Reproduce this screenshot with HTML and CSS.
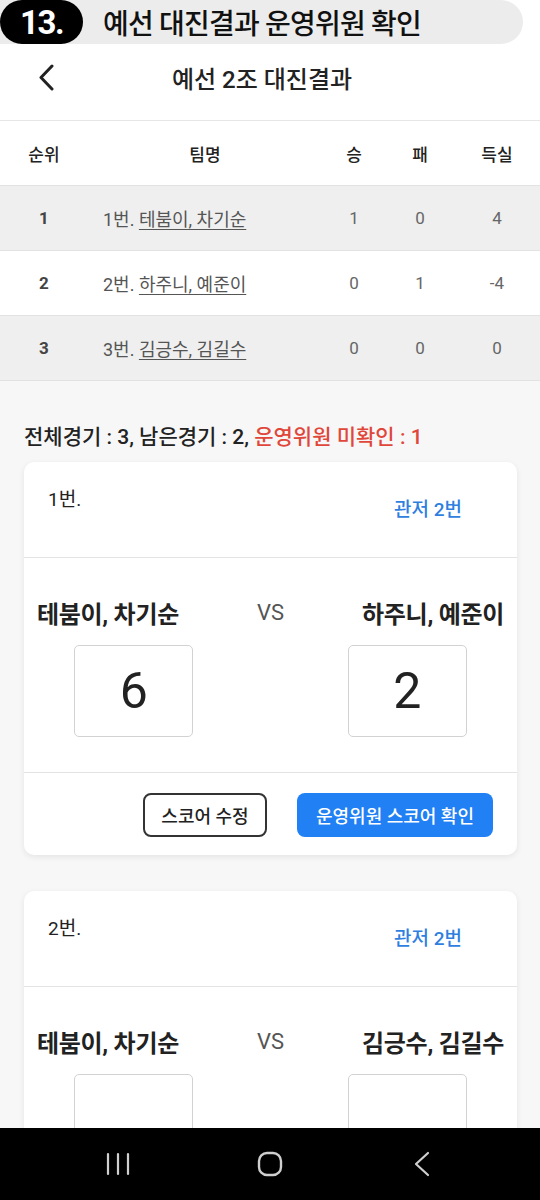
FILE: index.html
```html
<!DOCTYPE html>
<html lang="ko">

<head>
    <meta charset="UTF-8">
    <meta name="viewport" content="width=device-width, initial-scale=1.0">
    <title>예선 대진결과</title>
    <link rel="stylesheet" href="styles.css">
</head>

<body>
    <div class="screen">
        <div class="content">
            <!-- step banner -->
            <div class="banner">
                <div class="banner-pill">
                    <span class="step">13.</span>
                    <span class="banner-title">예선 대진결과 운영위원 확인</span>
                </div>
            </div>

            <!-- app bar -->
            <div class="appbar">
                <svg class="back" width="16" height="27" viewBox="0 0 16 27">
                    <polyline points="14,2 3,13.5 14,25" fill="none" stroke="#222" stroke-width="3" stroke-linecap="round" stroke-linejoin="round" />
                </svg>
                <div class="appbar-title">예선 2조 대진결과</div>
                <div></div>
            </div>

            <!-- standings -->
            <div class="standings">
                <div class="row head">
                    <div>순위</div>
                    <div>팀명</div>
                    <div>승</div>
                    <div>패</div>
                    <div>득실</div>
                </div>
                <div class="row gray">
                    <div class="rank">1</div>
                    <div class="team">1번. <u>테붐이, 차기순</u></div>
                    <div>1</div>
                    <div>0</div>
                    <div>4</div>
                </div>
                <div class="row">
                    <div class="rank">2</div>
                    <div class="team">2번. <u>하주니, 예준이</u></div>
                    <div>0</div>
                    <div>1</div>
                    <div>-4</div>
                </div>
                <div class="row gray">
                    <div class="rank">3</div>
                    <div class="team">3번. <u>김긍수, 김길수</u></div>
                    <div>0</div>
                    <div>0</div>
                    <div>0</div>
                </div>
            </div>

            <div class="summary">전체경기 : 3, 남은경기 : 2, <span class="warn">운영위원 미확인 : 1</span></div>

            <!-- match 1 -->
            <div class="card">
                <div class="card-head">
                    <div class="match-no">1번.</div>
                    <div class="court">관저 2번</div>
                </div>
                <div class="card-body">
                    <div class="name left">테붐이, 차기순</div>
                    <div class="vs">VS</div>
                    <div class="name right">하주니, 예준이</div>
                    <div class="score">6</div>
                    <div></div>
                    <div class="score">2</div>
                </div>
                <div class="card-foot">
                    <button class="btn outline">스코어 수정</button>
                    <button class="btn primary">운영위원 스코어 확인</button>
                </div>
            </div>

            <!-- match 2 (runs under the nav bar) -->
            <div class="card">
                <div class="card-head">
                    <div class="match-no">2번.</div>
                    <div class="court">관저 2번</div>
                </div>
                <div class="card-body">
                    <div class="name left">테붐이, 차기순</div>
                    <div class="vs">VS</div>
                    <div class="name right">김긍수, 김길수</div>
                    <div class="score"></div>
                    <div></div>
                    <div class="score"></div>
                </div>
            </div>
        </div>

        <!-- system nav bar -->
        <div class="navbar">
            <svg width="24" height="24" viewBox="0 0 24 24">
                <g stroke="#cfcfcf" stroke-width="2.2" stroke-linecap="round">
                    <line x1="2" y1="2" x2="2" y2="22" />
                    <line x1="12" y1="2" x2="12" y2="22" />
                    <line x1="22" y1="2" x2="22" y2="22" />
                </g>
            </svg>
            <svg width="26" height="26" viewBox="0 0 26 26">
                <rect x="2" y="2" width="22" height="22" rx="8" fill="none" stroke="#cfcfcf" stroke-width="2.4" />
            </svg>
            <svg width="16" height="26" viewBox="0 0 16 26">
                <polyline points="14,2 2,13 14,24" fill="none" stroke="#cfcfcf" stroke-width="2.2" stroke-linecap="round" stroke-linejoin="round" />
            </svg>
        </div>
    </div>
</body>

</html>
```

FILE: styles.css
```css
body {
    margin: 0;
    font-family: Roboto, "Noto Sans CJK KR", sans-serif;
    background: #f7f7f7;
    color: #222;
}

.screen {
    width: 540px;
    height: 1200px;
    display: flex;
    flex-direction: column;
    overflow: hidden;
}

.content {
    flex: 1;
    overflow: hidden;
}

/* step banner */
.banner {
    background: #fff;
    height: 44px;
}

.banner-pill {
    height: 44px;
    margin-right: 17px;
    background: #ececec;
    border-radius: 0 22px 22px 0;
    display: flex;
    align-items: center;
}

.step {
    width: 83px;
    height: 44px;
    border-radius: 22px;
    background: #000;
    color: #fff;
    font-size: 33px;
    font-weight: 700;
    letter-spacing: -1.5px;
    display: flex;
    align-items: center;
    justify-content: center;
}

.banner-title {
    margin-left: 20px;
    font-size: 28px;
    font-weight: 500;
    letter-spacing: -0.8px;
    color: #111;
}

/* app bar */
.appbar {
    background: #fff;
    height: 77px;
    box-sizing: border-box;
    padding-bottom: 9px;
    display: grid;
    grid-template-columns: 80px 1fr 96px;
    align-items: center;
    border-bottom: 1px solid #e6e6e6;
}

.back {
    margin-left: 38px;
}

.appbar-title {
    text-align: center;
    font-size: 24px;
    font-weight: 500;
    color: #222;
}

/* standings table */
.standings {
    background: #fff;
}

.row {
    display: grid;
    grid-template-columns: 88px 234px 64px 68px 86px;
    height: 64px;
    align-items: center;
    text-align: center;
    font-size: 17px;
    color: #666;
    border-bottom: 1px solid #e2e2e2;
}

.row.head {
    color: #222;
    font-weight: 500;
}

.row.gray {
    background: #efefef;
}

.rank {
    font-weight: 700;
    color: #444;
}

.team {
    text-align: left;
    padding-left: 15px;
    font-size: 18px;
    color: #555;
}

.team u {
    text-underline-offset: 3px;
}

/* summary */
.summary {
    padding: 42px 24px 0;
    line-height: 28px;
    font-size: 21px;
    font-weight: 500;
    color: #222;
}

.warn {
    color: #e0473a;
}

/* match cards */
.card {
    margin: 11px 23px 36px 24px;
    background: #fff;
    border-radius: 10px;
    box-shadow: 0 2px 6px rgba(0, 0, 0, 0.08);
}

.card-head {
    height: 96px;
    box-sizing: border-box;
    padding: 25px 55px 0 24px;
    display: flex;
    justify-content: space-between;
    align-items: flex-start;
    border-bottom: 1.5px solid #e3e3e3;
}

.match-no {
    font-size: 19px;
    line-height: 26px;
    color: #222;
}

.court {
    margin-top: 10px;
    font-size: 19px;
    line-height: 26px;
    font-weight: 500;
    color: #2f7fe0;
}

.card-body {
    height: 215px;
    box-sizing: border-box;
    padding: 40px 13px 0;
    display: grid;
    grid-template-columns: 1fr 80px 1fr;
    grid-template-rows: 28px 92px;
    row-gap: 19px;
    align-items: center;
    border-bottom: 1.5px solid #e3e3e3;
}

.name {
    font-size: 24px;
    font-weight: 700;
    letter-spacing: -0.3px;
    color: #222;
}

.name.right {
    text-align: right;
}

.vs {
    text-align: center;
    font-size: 22px;
    color: #555;
}

.score {
    justify-self: center;
    width: 119px;
    height: 92px;
    box-sizing: border-box;
    border: 1.5px solid #d2d2d2;
    border-radius: 5px;
    display: flex;
    align-items: center;
    justify-content: center;
    font-size: 50px;
    color: #222;
}

.card-foot {
    height: 82px;
    box-sizing: border-box;
    padding: 20px 24px 0;
    display: flex;
    justify-content: flex-end;
    gap: 30px;
}

.btn {
    height: 44px;
    border-radius: 8px;
    font-family: inherit;
    font-size: 18px;
    font-weight: 500;
}

.btn.outline {
    width: 124px;
    background: #fff;
    border: 2px solid #333;
    color: #222;
}

.btn.primary {
    width: 196px;
    background: #2080f4;
    border: none;
    color: #fff;
}

/* android nav bar */
.navbar {
    height: 72px;
    flex-shrink: 0;
    background: #000;
    display: grid;
    grid-template-columns: repeat(3, 152px);
    justify-content: center;
    justify-items: center;
    align-items: center;
}
```
